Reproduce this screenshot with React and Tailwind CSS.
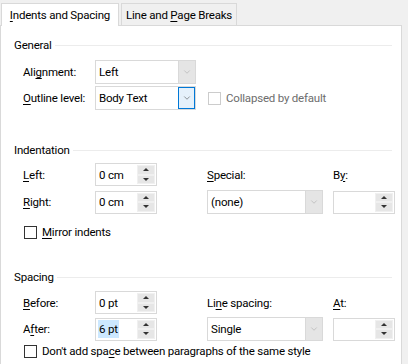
import { ChevronDown } from 'lucide-react';

const Key = ({ children }) => <span className="underline underline-offset-[2px] decoration-1">{children}</span>;

function GroupHeader({ title, className = '' }) {
  return (
    <div className={`flex items-center h-4 pl-[13px] pr-[9px] ${className}`}>
      <span>{title}</span>
      <div className="flex-1 h-px bg-[#ececec] ml-[3px]" />
    </div>
  );
}

function Select({ value, disabled, focused, width = 'w-[101px]' }) {
  const btn = focused
    ? 'bg-[#e5f1fb] border border-[#0078d7] text-[#333]'
    : 'bg-[#e5e5e5] border-l border-[#d9d9d9] text-[#a0a0a0]';
  return (
    <div className={`${width} h-[24px] flex border border-[#d9d9d9] bg-white`}>
      <div className="flex-1 flex items-center pl-[3px]">{value}</div>
      <div className={`w-[17px] flex items-center justify-center ${btn}`}>
        <ChevronDown size={10} strokeWidth={1.2} />
      </div>
    </div>
  );
}

function Arrow({ up }) {
  return (
    <div className="flex-1 flex items-center justify-center bg-[#e6e6e6] border border-[#f0f0f0]">
      <div
        className={`w-0 h-0 border-l-[3px] border-r-[3px] border-l-transparent border-r-transparent ${
          up ? 'border-b-[3px] border-b-[#333]' : 'border-t-[3px] border-t-[#333]'
        }`}
      />
    </div>
  );
}

function Spin({ value, highlight }) {
  return (
    <div className="w-[62px] h-[23px] flex border border-[#d9d9d9] bg-white">
      <div className="flex-1 flex items-center pl-[2px]">
        {value && (
          <span className={highlight ? 'bg-[#cce8ff] px-px leading-[18px]' : 'px-px'}>{value}</span>
        )}
      </div>
      <div className="w-[19px] flex flex-col p-px pl-0">
        <Arrow up />
        <Arrow />
      </div>
    </div>
  );
}

function Check({ children, disabled }) {
  return (
    <div className={`flex items-center gap-[5px] ${disabled ? 'text-[#6d6d6d]' : ''}`}>
      <div className={`w-[13px] h-[13px] border bg-white ${disabled ? 'border-[#cccccc]' : 'border-[#333]'}`} />
      <span>{children}</span>
    </div>
  );
}

export default function App() {
  return (
    <div className="w-[408px] h-[364px] overflow-hidden bg-[#f0f0f0] text-[11.5px] tracking-[-0.2px] text-black font-['Roboto',sans-serif] leading-4 whitespace-nowrap">
      <div className="flex items-end h-[25px] pl-px">
        <div className="w-[118px] h-[23px] bg-white border border-b-0 border-[#d9d9d9] flex items-center justify-center relative top-px pb-px">
          <span><Key>I</Key>ndents and Spacing</span>
        </div>
        <div className="w-[116px] h-[22px] ml-[2px] bg-[#f0f0f0] border border-b-0 border-[#d9d9d9] flex items-center justify-center">
          <span>Line and <Key>P</Key>age Breaks</span>
        </div>
      </div>

      <div className="w-[402px] h-[339px] bg-white border-l border-r border-t border-[#d9d9d9] pt-[11px]">
        <GroupHeader title="General" />
        <div className="pl-[22px] mt-[7px] flex flex-col gap-[2px]">
          <div className="flex items-center">
            <div className="w-[72px]">Ali<Key>g</Key>nment:</div>
            <Select value="Left" disabled />
          </div>
          <div className="flex items-center">
            <div className="w-[72px]"><Key>O</Key>utline level:</div>
            <Select value="Body Text" focused />
            <div className="ml-[12px]">
              <Check disabled>Collapsed by default</Check>
            </div>
          </div>
        </div>

        <GroupHeader title="Indentation" className="mt-[32px]" />
        <div className="pl-[22px] mt-[5px] grid grid-cols-[72px_112px_126px_62px] gap-y-[4px] items-center">
          <div><Key>L</Key>eft:</div>
          <Spin value="0 cm" />
          <div><Key>S</Key>pecial:</div>
          <div>B<Key>y</Key>:</div>
          <div><Key>R</Key>ight:</div>
          <Spin value="0 cm" />
          <Select value="(none)" width="w-[116px]" />
          <Spin />
        </div>
        <div className="pl-[23px] mt-[10px]">
          <Check><Key>M</Key>irror indents</Check>
        </div>

        <GroupHeader title="Spacing" className="mt-[29px]" />
        <div className="pl-[22px] mt-[6px] grid grid-cols-[72px_112px_126px_62px] gap-y-[3px] items-center">
          <div><Key>B</Key>efore:</div>
          <Spin value="0 pt" />
          <div>Li<Key>n</Key>e spacing:</div>
          <div><Key>A</Key>t:</div>
          <div>A<Key>f</Key>ter:</div>
          <Spin value="6 pt" highlight />
          <Select value="Single" width="w-[116px]" />
          <Spin />
        </div>
        <div className="pl-[23px] mt-[2px]">
          <Check>Don't add spa<Key>c</Key>e between paragraphs of the same style</Check>
        </div>
      </div>
    </div>
  );
}
